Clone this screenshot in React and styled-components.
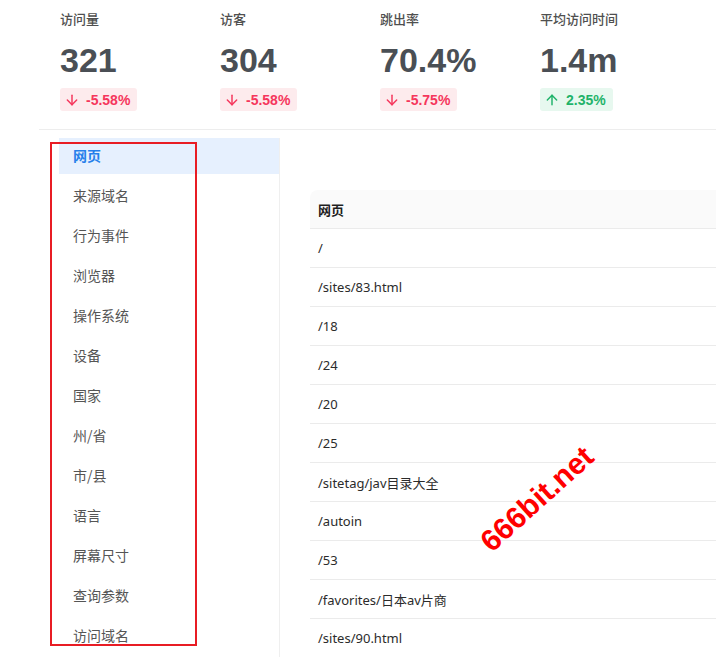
import React from 'react';
import styled, { createGlobalStyle } from 'styled-components';
import { ArrowDown, ArrowUp } from 'lucide-react';

const GlobalStyle = createGlobalStyle`
  html, body {
    margin: 0;
    padding: 0;
    background: #fff;
    overflow: hidden;
  }
  body {
    font-family: "Noto Sans", "Noto Sans CJK SC", sans-serif;
  }
`

const Page = styled.div`
  position: relative;
  width: 716px;
  height: 657px;
  overflow: hidden;
  padding-left: 39px;
  box-sizing: border-box;
`

const StatsBar = styled.div`
  display: flex;
  padding: 10px 0 18px 21px;
  border-bottom: 1px solid #ededed;
`

const Stat = styled.div`
  width: 160px;
  flex-shrink: 0;
  display: flex;
  flex-direction: column;
  align-items: flex-start;
`

const StatLabel = styled.div`
  font-family: "Noto Sans CJK SC", sans-serif;
  font-size: 13px;
  font-weight: 500;
  line-height: 18px;
  color: #4f4f4f;
`

const StatValue = styled.div`
  font-family: "Liberation Sans", Arial, sans-serif;
  font-size: 34px;
  font-weight: 700;
  line-height: 40px;
  margin-top: 12px;
  color: #4a4f55;
`

const Badge = styled.div`
  display: inline-flex;
  align-items: center;
  gap: 6px;
  height: 23px;
  margin-top: 8px;
  padding: 0 7px 0 4px;
  border-radius: 3px;
  font-family: "Liberation Sans", Arial, sans-serif;
  font-size: 14px;
  font-weight: 700;
  color: ${p => (p.up ? '#1fb36a' : '#f5365c')};
  background: ${p => (p.up ? '#e7f8ef' : '#fdebed')};
`

const Main = styled.div`
  display: flex;
  padding-top: 8px;
`

const Menu = styled.div`
  width: 220px;
  flex-shrink: 0;
  margin-left: 20px;
  border-right: 1px solid #efefef;
  height: 540px;
`

const MenuItem = styled.div`
  height: 36px;
  margin-bottom: 4px;
  padding: 0 0 2px 14px;
  box-sizing: border-box;
  display: flex;
  align-items: center;
  font-family: "Noto Sans CJK SC", sans-serif;
  font-size: 14px;
  font-weight: ${p => (p.active ? 700 : 400)};
  color: ${p => (p.active ? '#2680eb' : '#555')};
  background: ${p => (p.active ? '#e6f0fe' : 'transparent')};
`

const Content = styled.div`
  flex-shrink: 0;
  padding: 52px 0 0 30px;
`

const Table = styled.div`
  width: 480px;
`

const HeadRow = styled.div`
  height: 38px;
  display: flex;
  align-items: center;
  padding-left: 8px;
  background: #fafafa;
  border-top-left-radius: 8px;
  border-bottom: 1px solid #ebebeb;
  font-family: "Noto Sans CJK SC", sans-serif;
  font-size: 13px;
  font-weight: 700;
  color: #1f1f1f;
`

const Row = styled.div`
  height: 38px;
  display: flex;
  align-items: center;
  padding-left: 8px;
  border-bottom: 1px solid #ebebeb;
  font-family: "Noto Sans", "Noto Sans CJK SC", sans-serif;
  font-size: 13px;
  color: #2b2b2b;
`

const Annotation = styled.div`
  position: absolute;
  left: 50px;
  top: 142px;
  width: 143px;
  height: 500px;
  border: 2px solid #e81c24;
`

const Watermark = styled.div`
  position: absolute;
  left: 537px;
  top: 499px;
  transform: translate(-50%, -50%) rotate(-42deg);
  font-family: "Liberation Sans", Arial, sans-serif;
  font-size: 30px;
  font-weight: 700;
  color: #ff0000;
  white-space: nowrap;
  pointer-events: none;
`

const stats = [
  { label: '访问量', value: '321', change: '-5.58%', up: false },
  { label: '访客', value: '304', change: '-5.58%', up: false },
  { label: '跳出率', value: '70.4%', change: '-5.75%', up: false },
  { label: '平均访问时间', value: '1.4m', change: '2.35%', up: true },
];

const menu = ['网页', '来源域名', '行为事件', '浏览器', '操作系统', '设备', '国家', '州/省', '市/县', '语言', '屏幕尺寸', '查询参数', '访问域名'];

const pages = ['/', '/sites/83.html', '/18', '/24', '/20', '/25', '/sitetag/jav目录大全', '/autoin', '/53', '/favorites/日本av片商', '/sites/90.html'];

export default function App() {
  return (
    <Page>
      <GlobalStyle />
      <StatsBar>
        {stats.map(s => (
          <Stat key={s.label}>
            <StatLabel>{s.label}</StatLabel>
            <StatValue>{s.value}</StatValue>
            <Badge up={s.up}>
              {s.up ? <ArrowUp size={16} strokeWidth={2.2} /> : <ArrowDown size={16} strokeWidth={2.2} />}
              {s.change}
            </Badge>
          </Stat>
        ))}
      </StatsBar>
      <Main>
        <Menu>
          {menu.map((m, i) => (
            <MenuItem key={m} active={i === 0}>{m}</MenuItem>
          ))}
        </Menu>
        <Content>
          <Table>
            <HeadRow>网页</HeadRow>
            {pages.map(p => (
              <Row key={p}>{p}</Row>
            ))}
          </Table>
        </Content>
      </Main>
      <Annotation />
      <Watermark>666bit.net</Watermark>
    </Page>
  );
}
